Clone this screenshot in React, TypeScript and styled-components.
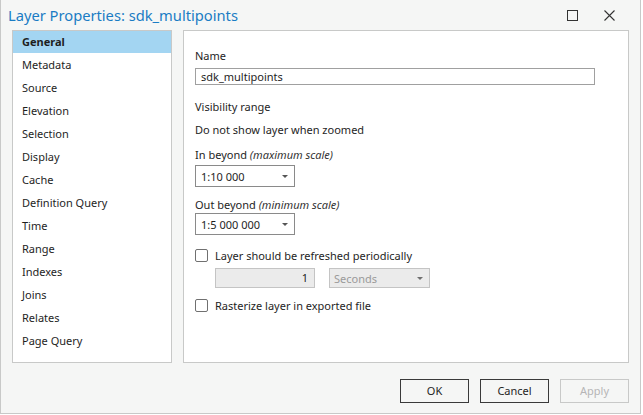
import { FC } from 'react'
import styled, { createGlobalStyle } from 'styled-components'

const GlobalStyle = createGlobalStyle`
    html, body {
        margin: 0;
        padding: 0;
        background: #ffffff;
    }
    body {
        font-family: "Noto Sans", "Open Sans", sans-serif;
        font-size: 11px;
        color: #1e1e1e;
    }
    * {
        box-sizing: border-box;
    }
`

const Window = styled.div`
    width: 641px;
    height: 414px;
    background: #f5f6f5;
    border: 1px solid #c8c9c8;
    border-top: none;
    display: flex;
    flex-direction: column;
`

const TitleBar = styled.div`
    height: 30px;
    flex-shrink: 0;
    display: flex;
    align-items: center;
    padding: 0 12px 0 7px;
`

const Title = styled.div`
    flex: 1;
    font-size: 14.7px;
    color: #1a7cc4;
`

const TitleButton = styled.div`
    width: 37px;
    display: flex;
    justify-content: center;
    align-items: center;
`

const Body = styled.div`
    height: 333px;
    flex-shrink: 0;
    display: flex;
    gap: 11px;
    padding: 0 11px;
`

const Sidebar = styled.ul`
    list-style: none;
    margin: 0;
    padding: 0;
    width: 160px;
    height: 333px;
    background: #ffffff;
    border: 1px solid #c8c9c8;
`

interface iItem {
    active?: boolean;
}

const Item = styled.li<iItem>`
    height: 23px;
    line-height: 23px;
    padding-left: 9px;
    background: ${props => props.active ? '#a3d5f2' : 'transparent'};
    font-weight: ${props => props.active ? 700 : 400};
    &:first-child {
        height: 22px;
        line-height: 22px;
    }
`

const Panel = styled.div`
    flex: 1;
    height: 333px;
    background: #ffffff;
    border: 1px solid #c8c9c8;
    padding: 17px 11px 0 11px;
    display: flex;
    flex-direction: column;
    align-items: flex-start;
`

interface iLabel {
    top?: number;
}

const Label = styled.div<iLabel>`
    line-height: 16px;
    margin-top: ${props => props.top || 0}px;
    white-space: nowrap;
`

const Hint = styled.i`
    color: #333;
`

const TextInput = styled.div`
    margin-top: 4px;
    width: 400px;
    height: 17px;
    line-height: 15px;
    border: 1px solid #a0a0a0;
    padding: 0 5px;
`

interface iSelect {
    top?: number;
}

const Select = styled.div<iSelect>`
    margin-top: ${props => props.top || 0}px;
    width: 100px;
    height: 22px;
    border: 1px solid #8a8a8a;
    display: flex;
    align-items: center;
    justify-content: space-between;
    padding-left: 5px;
`

const Arrow = styled.span<{ disabled?: boolean }>`
    width: 0;
    height: 0;
    margin-right: 6px;
    border-left: 3px solid transparent;
    border-right: 3px solid transparent;
    border-top: 3px solid ${props => props.disabled ? '#6f6f6f' : '#555'};
`

const CheckRow = styled.label<iLabel>`
    display: flex;
    align-items: center;
    gap: 7px;
    height: 16px;
    margin-top: ${props => props.top || 0}px;
`

const Box = styled.span`
    width: 13px;
    height: 13px;
    border: 1px solid #707070;
    border-radius: 2px;
    background: #ffffff;
`

const SubRow = styled.div`
    display: flex;
    gap: 14px;
    margin: 5px 0 0 20px;
`

const DisabledInput = styled.div`
    width: 100px;
    height: 20px;
    line-height: 18px;
    text-align: right;
    padding-right: 6px;
    background: #ebebeb;
    border: 1px solid #c4c4c4;
`

const DisabledSelect = styled.div`
    width: 101px;
    height: 20px;
    padding-left: 4px;
    background: #ebebeb;
    border: 1px solid #c4c4c4;
    color: #9a9a9a;
    display: flex;
    align-items: center;
    justify-content: space-between;
`

const Footer = styled.div`
    flex: 1;
    display: flex;
    justify-content: flex-end;
    align-items: flex-start;
    gap: 11px;
    padding: 16px 11px 0 0;
`

interface iButton {
    disabled?: boolean;
}

const Button = styled.div<iButton>`
    width: 69px;
    height: 24px;
    line-height: 22px;
    text-align: center;
    background: #f5f6f5;
    border: 1px solid ${props => props.disabled ? '#c8c9c8' : '#3a3a3a'};
    color: ${props => props.disabled ? '#b5b5b5' : '#1e1e1e'};
`

const items = [
    'General', 'Metadata', 'Source', 'Elevation', 'Selection', 'Display', 'Cache',
    'Definition Query', 'Time', 'Range', 'Indexes', 'Joins', 'Relates', 'Page Query',
]

const App: FC = () => {
    return (
        <>
            <GlobalStyle />
            <Window>
                <TitleBar>
                    <Title>Layer Properties: sdk_multipoints</Title>
                    <TitleButton>
                        <svg width="11" height="11" viewBox="0 0 11 11">
                            <rect x="0.5" y="0.5" width="10" height="10" fill="none" stroke="#333" />
                        </svg>
                    </TitleButton>
                    <TitleButton>
                        <svg width="11" height="11" viewBox="0 0 11 11">
                            <path d="M0.5 0.5 L10.5 10.5 M10.5 0.5 L0.5 10.5" stroke="#333" strokeWidth="1.1" />
                        </svg>
                    </TitleButton>
                </TitleBar>
                <Body>
                    <Sidebar>
                        {items.map((name, i) => (
                            <Item key={name} active={i === 0}>{name}</Item>
                        ))}
                    </Sidebar>
                    <Panel>
                        <Label>Name</Label>
                        <TextInput>sdk_multipoints</TextInput>
                        <Label top={14}>Visibility range</Label>
                        <Label top={7}>Do not show layer when zoomed</Label>
                        <Label top={9}>In beyond <Hint>(maximum scale)</Hint></Label>
                        <Select top={2}>1:10 000<Arrow /></Select>
                        <Label top={10}>Out beyond <Hint>(minimum scale)</Hint></Label>
                        <Select>1:5 000 000<Arrow /></Select>
                        <CheckRow top={12}><Box />Layer should be refreshed periodically</CheckRow>
                        <SubRow>
                            <DisabledInput>1</DisabledInput>
                            <DisabledSelect>Seconds<Arrow disabled /></DisabledSelect>
                        </SubRow>
                        <CheckRow top={9}><Box />Rasterize layer in exported file</CheckRow>
                    </Panel>
                </Body>
                <Footer>
                    <Button>OK</Button>
                    <Button>Cancel</Button>
                    <Button disabled>Apply</Button>
                </Footer>
            </Window>
        </>
    )
}

export default App
